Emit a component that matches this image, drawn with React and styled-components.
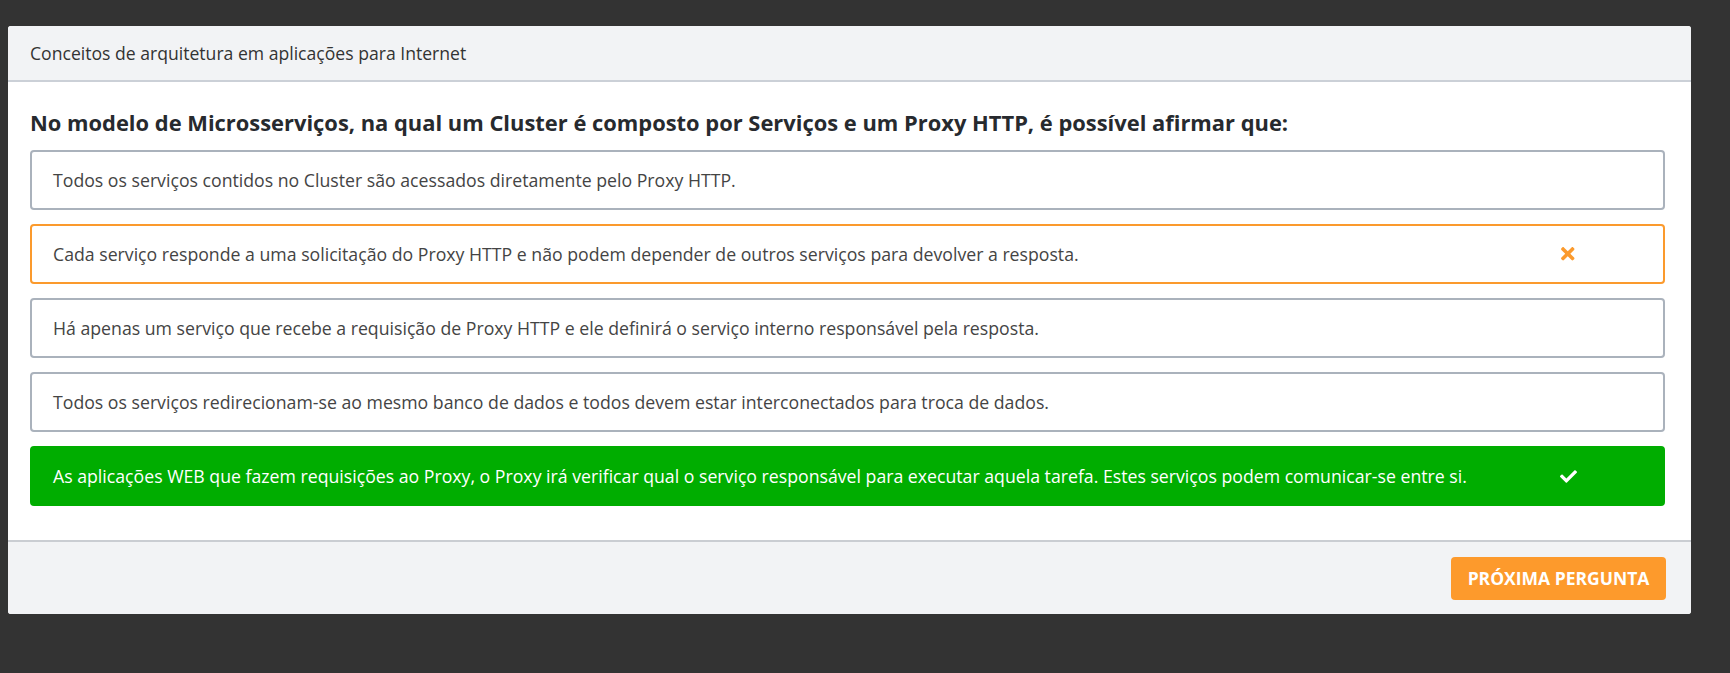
import React from 'react'
import styled, { createGlobalStyle } from 'styled-components'
import { FaTimes, FaCheck } from 'react-icons/fa'

const GlobalStyle = createGlobalStyle`
  html, body {
    margin: 0;
    padding: 0;
    background: #333333;
    font-family: "Open Sans", "Noto Sans", "Liberation Sans", sans-serif;
  }
  * { box-sizing: border-box; }
`

const Page = styled.div`
  padding: 26px 39px 57px 8px;
  min-height: 673px;
`

const Card = styled.div`
  background: #ffffff;
  border-radius: 3px;
  overflow: hidden;
  display: flex;
  flex-direction: column;
`

const Header = styled.div`
  height: 56px;
  background: #f2f3f5;
  border-bottom: 2px solid #cbd0d7;
  display: flex;
  align-items: center;
  padding: 0 22px;
  font-size: 17.6px;
  color: #333;
`

const Body = styled.div`
  padding: 26px 26px 34px 22px;
  display: flex;
  flex-direction: column;
`

const Question = styled.h2`
  margin: 0 0 12px;
  font-size: 21.9px;
  line-height: 30px;
  font-weight: 700;
  color: #272a2e;
`

const Options = styled.div`
  display: flex;
  flex-direction: column;
  gap: 14px;
`

const Option = styled.div`
  height: 60px;
  border-radius: 4px;
  border: 2px solid
    ${(p) => (p.$state === 'wrong' ? '#fb9a2d' : p.$state === 'right' ? '#00ad00' : '#aab2bc')};
  background: ${(p) => (p.$state === 'right' ? '#00ad00' : '#ffffff')};
  color: ${(p) => (p.$state === 'right' ? '#ffffff' : '#444444')};
  display: flex;
  align-items: center;
  justify-content: space-between;
  padding: 0 85px 0 21px;
  font-size: 17.7px;
`

const Mark = styled.span`
  width: 20px;
  display: flex;
  align-items: center;
  justify-content: center;
  font-size: ${(p) => (p.$state === 'wrong' ? '19.5px' : '17px')};
  color: ${(p) => (p.$state === 'wrong' ? '#fb9a2d' : '#ffffff')};
`

const Footer = styled.div`
  height: 74px;
  background: #f2f3f5;
  border-top: 2px solid #cacdd2;
  display: flex;
  align-items: center;
  justify-content: flex-end;
  padding: 0 25px;
`

const NextButton = styled.button`
  width: 215px;
  height: 43px;
  border: none;
  border-radius: 4px;
  background: #fd9a2c;
  color: #ffffff;
  font-family: inherit;
  font-size: 17.5px;
  font-weight: 700;
  text-transform: uppercase;
  cursor: pointer;
`

const options = [
  { text: 'Todos os serviços contidos no Cluster são acessados diretamente pelo Proxy HTTP.' },
  {
    text: 'Cada serviço responde a uma solicitação do Proxy HTTP e não podem depender de outros serviços para devolver a resposta.',
    state: 'wrong',
  },
  {
    text: 'Há apenas um serviço que recebe a requisição de Proxy HTTP e ele definirá o serviço interno responsável pela resposta.',
  },
  {
    text: 'Todos os serviços redirecionam-se ao mesmo banco de dados e todos devem estar interconectados para troca de dados.',
  },
  {
    text: 'As aplicações WEB que fazem requisições ao Proxy, o Proxy irá verificar qual o serviço responsável para executar aquela tarefa. Estes serviços podem comunicar-se entre si.',
    state: 'right',
  },
]

export default function App() {
  return (
    <Page>
      <GlobalStyle />
      <Card>
        <Header>Conceitos de arquitetura em aplicações para Internet</Header>
        <Body>
          <Question>
            No modelo de Microsserviços, na qual um Cluster é composto por Serviços e um Proxy HTTP, é possível afirmar que:
          </Question>
          <Options>
            {options.map((o, i) => (
              <Option key={i} $state={o.state}>
                <span>{o.text}</span>
                {o.state === 'wrong' && (
                  <Mark $state="wrong">
                    <FaTimes />
                  </Mark>
                )}
                {o.state === 'right' && (
                  <Mark $state="right">
                    <FaCheck />
                  </Mark>
                )}
              </Option>
            ))}
          </Options>
        </Body>
        <Footer>
          <NextButton>Próxima pergunta</NextButton>
        </Footer>
      </Card>
    </Page>
  )
}
